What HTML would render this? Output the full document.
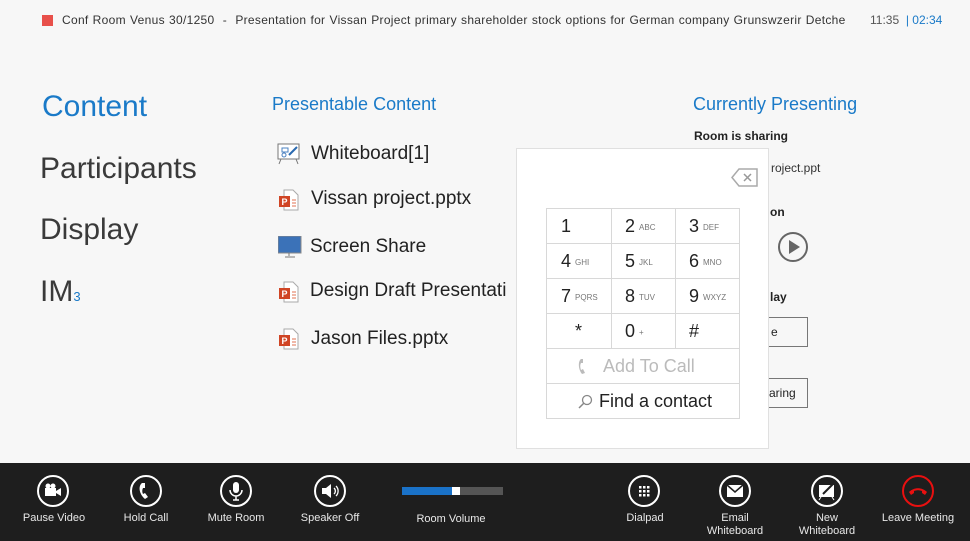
<!DOCTYPE html>
<html><head><style>
*{margin:0;padding:0;box-sizing:border-box}
body{width:970px;height:541px;overflow:hidden;background:#f7f7f7;font-family:"Liberation Sans",sans-serif;color:#222;position:relative}
.a{position:absolute;white-space:nowrap}
.nav{font-size:30px;color:#3a3a3a;left:40px}
.item{font-size:19px;color:#222;left:311px}
.bar{position:absolute;left:0;top:463px;width:970px;height:78px;background:#1e1e1e}
.btn{position:absolute;top:475px;width:32px;height:32px;border:2px solid #fff;border-radius:50%;}
.lbl{position:absolute;top:512px;color:#e8e8e8;font-size:11px;text-align:center;width:100px;line-height:13px}
.grid{position:absolute;left:546px;top:208px;width:194px;height:211px;border:1px solid #d8d8d8}
.cell{position:absolute;border-right:1px solid #d8d8d8;border-bottom:1px solid #d8d8d8;height:35px;font-size:18px;color:#222;line-height:35px;padding-left:14px}
.cell small{font-size:8px;color:#777;margin-left:4px;vertical-align:middle}
.ppt{position:absolute;left:279px;width:20px;height:22px}
</style></head><body>
<div class="a" style="left:42px;top:15px;width:11px;height:11px;background:#e8504a"></div>
<div class="a" style="left:62px;top:13px;font-size:12px;color:#333;letter-spacing:0.3px;word-spacing:0.5px">Conf Room Venus 30/1250 &nbsp;-&nbsp; Presentation for Vissan Project primary shareholder stock options for German company Grunswzerir Detche</div>
<div class="a" style="left:870px;top:13px;font-size:12px;color:#555">11:35 &nbsp;<span style="color:#1a7ac8">| 02:34</span></div>

<div class="a nav" style="top:90px;color:#1a7ac8;left:42px">Content</div>
<div class="a nav" style="top:152px">Participants</div>
<div class="a nav" style="top:213px">Display</div>
<div class="a nav" style="top:275px">IM<span style="font-size:13px;color:#1a7ac8">3</span></div>

<div class="a" style="left:272px;top:94px;font-size:18px;color:#1a7ac8">Presentable Content</div>
<svg class="a" style="left:277px;top:143px" width="24" height="22"><rect x="1" y="1" width="21" height="15" fill="#fff" stroke="#777"/><rect x="5" y="5" width="6" height="4" fill="none" stroke="#4a80c0"/><circle cx="7" cy="12" r="2" fill="none" stroke="#4a80c0"/><path d="M12 12l8-8" stroke="#2a6ab0" stroke-width="2"/><path d="M4 16l-2 5M19 16l2 5" stroke="#777"/></svg>
<div class="a item" style="top:143px">Whiteboard[1]</div>
<svg class="ppt" style="top:189px" viewBox="0 0 20 22"><path d="M5 1h9l5 5v15H5z" fill="#fff" stroke="#aaa"/><rect x="0" y="7" width="11" height="11" fill="#d04525"/><text x="2.5" y="16" font-size="9" fill="#fff" font-family="Liberation Sans" font-weight="bold">P</text><path d="M13 11h4M13 14h4M13 17h4" stroke="#e07050"/></svg>
<div class="a item" style="top:188px">Vissan project.pptx</div>
<svg class="a" style="left:278px;top:236px" width="24" height="22"><rect x="0" y="0" width="23" height="17" fill="#3b72b8" stroke="#888"/><path d="M11 17v3M7 21h10" stroke="#777"/></svg>
<div class="a item" style="top:236px;left:310px">Screen Share</div>
<svg class="ppt" style="top:281px" viewBox="0 0 20 22"><path d="M5 1h9l5 5v15H5z" fill="#fff" stroke="#aaa"/><rect x="0" y="7" width="11" height="11" fill="#d04525"/><text x="2.5" y="16" font-size="9" fill="#fff" font-family="Liberation Sans" font-weight="bold">P</text><path d="M13 11h4M13 14h4M13 17h4" stroke="#e07050"/></svg>
<div class="a item" style="top:280px;left:310px">Design Draft Presentati</div>
<svg class="ppt" style="top:328px" viewBox="0 0 20 22"><path d="M5 1h9l5 5v15H5z" fill="#fff" stroke="#aaa"/><rect x="0" y="7" width="11" height="11" fill="#d04525"/><text x="2.5" y="16" font-size="9" fill="#fff" font-family="Liberation Sans" font-weight="bold">P</text><path d="M13 11h4M13 14h4M13 17h4" stroke="#e07050"/></svg>
<div class="a item" style="top:328px">Jason Files.pptx</div>

<div class="a" style="left:693px;top:94px;font-size:18px;color:#1a7ac8">Currently Presenting</div>
<div class="a" style="left:694px;top:129px;font-size:12px;font-weight:bold;color:#222">Room is sharing</div>
<div class="a" style="left:771px;top:161px;font-size:12px;color:#333">roject.ppt</div>
<div class="a" style="left:770px;top:205px;font-size:12px;font-weight:bold">on</div>
<svg class="a" style="left:777px;top:231px" width="32" height="32"><circle cx="16" cy="16" r="14" fill="none" stroke="#666" stroke-width="2"/><path d="M12 9v14l11-7z" fill="#666"/></svg>
<div class="a" style="left:770px;top:290px;font-size:12px;font-weight:bold">lay</div>
<div class="a" style="left:760px;top:317px;width:48px;height:30px;border:1px solid #777;font-size:12px;line-height:28px;padding-left:10px">e</div>
<div class="a" style="left:760px;top:378px;width:48px;height:30px;border:1px solid #777;font-size:12px;line-height:28px;padding-left:8px">aring</div>

<div class="a" style="left:516px;top:148px;width:253px;height:301px;background:#fff;border:1px solid #e0e0e0"></div>
<svg class="a" style="left:731px;top:168px" width="27" height="19"><path d="M8 1h18v17H8L1 9.5z" fill="none" stroke="#aaa" stroke-width="1.5"/><path d="M13 6l7 7M20 6l-7 7" stroke="#999" stroke-width="1.5"/></svg>
<div class="grid">
<div class="cell" style="left:0;top:0;width:65px">1</div>
<div class="cell" style="left:64px;top:0;width:65px">2<small>ABC</small></div>
<div class="cell" style="left:128px;top:0;width:65px;border-right:0">3<small>DEF</small></div>
<div class="cell" style="left:0;top:35px;width:65px">4<small>GHI</small></div>
<div class="cell" style="left:64px;top:35px;width:65px">5<small>JKL</small></div>
<div class="cell" style="left:128px;top:35px;width:65px;border-right:0">6<small>MNO</small></div>
<div class="cell" style="left:0;top:70px;width:65px">7<small>PQRS</small></div>
<div class="cell" style="left:64px;top:70px;width:65px">8<small>TUV</small></div>
<div class="cell" style="left:128px;top:70px;width:65px;border-right:0">9<small>WXYZ</small></div>
<div class="cell" style="left:0;top:105px;width:65px;padding-left:28px">*</div>
<div class="cell" style="left:64px;top:105px;width:65px">0<small>+</small></div>
<div class="cell" style="left:128px;top:105px;width:65px;border-right:0">#</div>
<div class="cell" style="left:0;top:140px;width:193px;border-right:0;color:#bbb;padding-left:56px">Add To Call</div>
<div class="cell" style="left:0;top:175px;width:193px;border-right:0;border-bottom:0;padding-left:52px">Find a contact</div>
<svg style="position:absolute;left:30px;top:149px" width="14" height="18"><path d="M4 1c-3 2-3 10 1 15l3-1-2-4-2 1c-1-3-1-5 0-7l2 0 0-4z" fill="#bbb"/></svg>
<svg style="position:absolute;left:30px;top:185px" width="16" height="16"><circle cx="10" cy="6" r="4.5" fill="none" stroke="#888" stroke-width="1.3"/><path d="M7 9l-5 5" stroke="#888" stroke-width="1.5"/></svg>
</div>

<div class="bar"></div>
<div class="btn" style="left:37px"><svg width="28" height="28"><rect x="6" y="11" width="11" height="8" fill="#fff"/><circle cx="9" cy="9" r="2.5" fill="#fff"/><circle cx="14" cy="9" r="2.5" fill="#fff"/><path d="M17 14l5-3v8l-5-3z" fill="#fff"/></svg></div>
<div class="lbl" style="left:4px">Pause Video</div>
<div class="btn" style="left:130px"><svg width="28" height="28"><path d="M10 6c-4 3-3 11 3 16l3-2-3-4-2 1c-1-2-1-4 0-6l2 0 0-5z" fill="#fff"/></svg></div>
<div class="lbl" style="left:96px">Hold Call</div>
<div class="btn" style="left:220px"><svg width="28" height="28"><rect x="11" y="5" width="6" height="11" rx="3" fill="#fff"/><path d="M8 13a6 6 0 0012 0M14 19v4M11 23h6" stroke="#fff" stroke-width="1.5" fill="none"/></svg></div>
<div class="lbl" style="left:186px">Mute Room</div>
<div class="btn" style="left:314px"><svg width="28" height="28"><path d="M6 11h4l5-4v14l-5-4H6z" fill="#fff"/><path d="M18 11a4 4 0 010 6M20 9a7 7 0 010 10" stroke="#fff" stroke-width="1.3" fill="none"/></svg></div>
<div class="lbl" style="left:280px">Speaker Off</div>
<div class="a" style="left:402px;top:487px;width:50px;height:8px;background:#1a72c8"></div>
<div class="a" style="left:452px;top:487px;width:8px;height:8px;background:#fff"></div>
<div class="a" style="left:460px;top:487px;width:43px;height:8px;background:#555"></div>
<div class="lbl" style="left:401px;top:513px">Room Volume</div>
<div class="btn" style="left:628px"><svg width="28" height="28"><g fill="#fff"><rect x="9" y="9" width="2.5" height="2.5"/><rect x="13" y="9" width="2.5" height="2.5"/><rect x="17" y="9" width="2.5" height="2.5"/><rect x="9" y="13" width="2.5" height="2.5"/><rect x="13" y="13" width="2.5" height="2.5"/><rect x="17" y="13" width="2.5" height="2.5"/><rect x="9" y="17" width="2.5" height="2.5"/><rect x="13" y="17" width="2.5" height="2.5"/><rect x="17" y="17" width="2.5" height="2.5"/></g></svg></div>
<div class="lbl" style="left:595px">Dialpad</div>
<div class="btn" style="left:719px"><svg width="28" height="28"><rect x="6" y="8" width="16" height="12" fill="#fff"/><path d="M6 8l8 7 8-7" stroke="#1e1e1e" stroke-width="1.5" fill="none"/></svg></div>
<div class="lbl" style="left:685px">Email<br>Whiteboard</div>
<div class="btn" style="left:811px"><svg width="28" height="28"><rect x="6" y="8" width="15" height="12" fill="#fff"/><path d="M10 17l10-10" stroke="#1e1e1e" stroke-width="2"/><path d="M8 20l-2 3M19 20l2 3" stroke="#fff"/></svg></div>
<div class="lbl" style="left:777px">New<br>Whiteboard</div>
<div class="btn" style="left:902px;border-color:#e81010"><svg width="28" height="28"><path d="M5 15c5-5 13-5 18 0l-2 3-3-2v-2c-3-1-5-1-8 0v2l-3 2z" fill="#e81010"/></svg></div>
<div class="lbl" style="left:868px">Leave Meeting</div>
</body></html>
